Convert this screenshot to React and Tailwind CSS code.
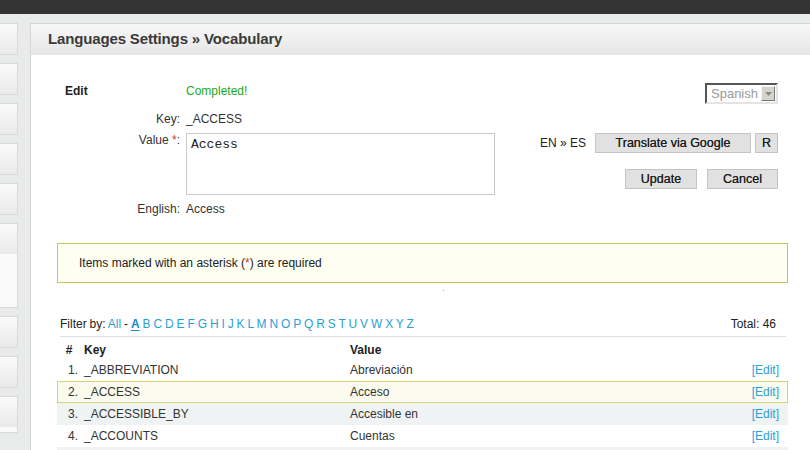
const sideBoxes = [32, 32, 32, 32, 32, 85, 32, 32, 37]

const letters = "ABCDEFGHIJKLMNOPQRSTUVWXYZ".split("")

const rows = [
  { n: 1, key: "_ABBREVIATION", value: "Abreviación" },
  { n: 2, key: "_ACCESS", value: "Acceso", active: true },
  { n: 3, key: "_ACCESSIBLE_BY", value: "Accesible en" },
  { n: 4, key: "_ACCOUNTS", value: "Cuentas" },
]

function Sidebar() {
  return (
    <div className="flex w-[18px] shrink-0 flex-col gap-[8px] pt-[9px]">
      {sideBoxes.map((h, i) => (
        <div
          key={i}
          style={{ height: h }}
          className="overflow-hidden border border-l-0 border-[#d8d9d8] bg-[#fafafa]"
        >
          <div className="h-[30px] bg-gradient-to-b from-[#fbfbfb] to-[#e9e9e9]" />
        </div>
      ))}
    </div>
  )
}

function Btn({ children, className = "" }) {
  return (
    <button
      className={
        "h-[20px] border border-[#c4c4c4] bg-[#e1e1e1] text-[12.5px] leading-[18px] text-[#1e1e1e] [text-shadow:0_0_0.4px_#333] " +
        className
      }
    >
      {children}
    </button>
  )
}

function EditForm() {
  return (
    <div className="flex pt-[27px]">
      <div className="grid w-[438px] shrink-0 grid-cols-[123px_1fr] gap-x-[6px] text-[12px] text-[#333]">
        <div className="h-[18px] pl-[8px] leading-[18px] font-bold text-[#222]">Edit</div>
        <div className="h-[18px] leading-[18px] text-[#22a822]">Completed!</div>

        <div className="mt-[10px] h-[18px] text-right leading-[18px]">Key:</div>
        <div className="mt-[10px] h-[18px] leading-[18px]">_ACCESS</div>

        <div className="mt-[5px] text-right leading-[14px]">
          Value <span className="text-[#c33]">*</span>:
        </div>
        <div className="mt-[5px]">
          <div className="h-[62px] w-[309px] border border-[#c9c9c9] bg-white px-[4px] pt-[3px] font-['Liberation_Mono',monospace] text-[13px] leading-[16px] text-[#222]">
            Access
          </div>
        </div>

        <div className="mt-[5px] h-[18px] text-right leading-[18px]">English:</div>
        <div className="mt-[5px] h-[18px] leading-[18px]">Access</div>
      </div>

      <div className="flex flex-1 flex-col items-end pr-[10px] text-[12px]">
        <div className="mt-[1px] flex h-[21px] w-[73px] items-center border-2 border-t-[#555] border-l-[#555] border-r-[#e4e4e4] border-b-[#e4e4e4] bg-white">
          <span className="flex-1 pl-[4px] text-[13px] text-[#9a9a9a]">Spanish</span>
          <span className="mr-[1px] flex h-[15px] w-[14px] items-center justify-center border border-t-[#f4f4f4] border-l-[#f4f4f4] border-r-[#777] border-b-[#777] bg-[#d6d3cd]">
            <svg width="7" height="4" viewBox="0 0 7 4">
              <path d="M0 0h7L3.5 4z" fill="#8a8a8a" />
            </svg>
          </span>
        </div>

        <div className="mt-[29px] flex items-center">
          <span className="mr-[9px] text-[#222]">EN » ES</span>
          <Btn className="w-[156px]">Translate via Google</Btn>
          <Btn className="ml-[4px] w-[23px]">R</Btn>
        </div>

        <div className="mt-[16px] flex">
          <Btn className="w-[72px] border-[#111]">Update</Btn>
          <Btn className="ml-[10px] w-[71px]">Cancel</Btn>
        </div>
      </div>
    </div>
  )
}

function Filter() {
  return (
    <div className="mr-[2px] ml-[3px] mt-[25px] flex border-b border-[#dfdfdf] pb-[4px] text-[12px] leading-[16px]">
      <div className="flex-1 text-[#222] [word-spacing:-0.45px]">
        Filter by: <span className="text-[#2a9fd6]">All</span> -{" "}
        {letters.map((l) => (
          <span key={l}>
            <span
              className={
                l === "A" ? "font-bold text-[#1888c4] underline underline-offset-2" : "text-[#2a9fd6]"
              }
            >
              {l}
            </span>{" "}
          </span>
        ))}
      </div>
      <div className="pr-[10px] text-[#222]">Total: 46</div>
    </div>
  )
}

function Table() {
  return (
    <div className="text-[12px] text-[#333]">
      <div className="grid h-[22px] grid-cols-[22px_270px_1fr] border border-transparent pt-[5px] leading-[14px] font-bold text-[#222]">
        <div className="text-center">#</div>
        <div className="pl-[4px]">Key</div>
        <div>Value</div>
      </div>
      {rows.map((r) => (
        <div
          key={r.n}
          className={
            "grid h-[22px] grid-cols-[22px_270px_1fr_auto] items-center border leading-[14px] " +
            (r.active
              ? "border-[#d8d37a] bg-[#fafbec]"
              : r.n === 3
              ? "border-transparent bg-[#eff3f4]"
              : "border-transparent bg-white")
          }
        >
          <div className="pr-[2px] text-right">{r.n}.</div>
          <div className="pl-[4px]">{r.key}</div>
          <div>{r.value}</div>
          <div className="pr-[8px] text-[#2a9fd6]">[Edit]</div>
        </div>
      ))}
      <div className="h-[22px] bg-[#eff3f4]" />
    </div>
  )
}

export default function App() {
  return (
    <div className="h-[450px] w-[810px] overflow-hidden bg-[#e9ebea] font-['Liberation_Sans',Arial,sans-serif]">
      <div className="h-[14px] bg-[#333333]" />
      <div className="flex gap-[12px]">
        <Sidebar />
        <div className="mt-[9px] min-w-0 flex-1 border-t border-l border-[#d3d4d3] bg-white">
          <div className="flex h-[31px] items-center bg-gradient-to-b from-[#f8f8f8] to-[#e6e6e6] pl-[17px] text-[15px] font-bold tracking-[-0.15px] text-[#3a3a3a]">
            Languages Settings » Vocabulary
          </div>
          <div className="pr-[22px] pl-[26px]">
            <EditForm />
            <div className="mt-[25px] flex h-[40px] items-center border border-[#c9c35c] bg-[#fefff1] pl-[21px] text-[12px] text-[#222]">
              Items marked with an asterisk (<span className="text-[#c33]">*</span>) are required
            </div>
            <div className="mt-[7px] ml-[386px] h-px w-px bg-[#b0a860]" />
            <Filter />
            <Table />
          </div>
        </div>
      </div>
    </div>
  )
}
